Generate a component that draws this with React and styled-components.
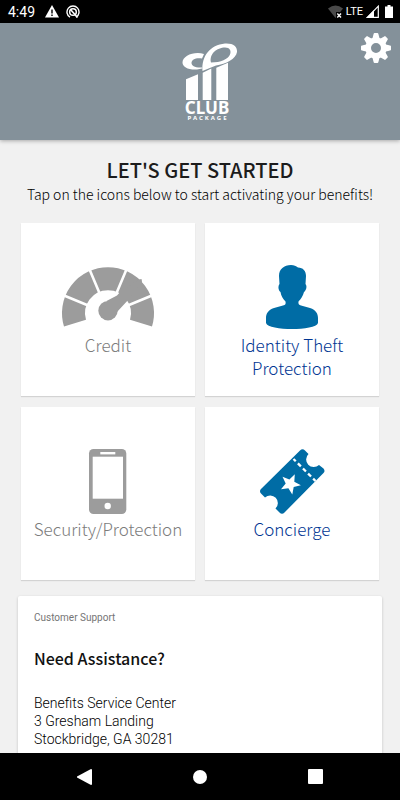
import styled, { createGlobalStyle } from 'styled-components';

const GlobalStyle = createGlobalStyle`
  * {
    box-sizing: border-box;
  }

  body {
    margin: 0;
    background-color: #f1f1f1;
    font-family: "Noto Sans CJK SC", "Noto Sans", sans-serif;
  }
`;

const Screen = styled.div`
  display: flex;
  flex-direction: column;
  height: 100vh;
`;

//Android status bar
const StatusBar = styled.div`
  display: flex;
  align-items: center;
  flex-shrink: 0;
  height: 23px;
  padding: 0 7px 0 8px;
  background-color: #000;
  color: #fff;
  font-family: Roboto, sans-serif;
  font-size: 14px;
`;

const StatusGroup = styled.div`
  display: flex;
  align-items: center;
  gap: ${(props) => props.$gap};
  margin-left: ${(props) => props.$left};
`;

const Network = styled.span`
  font-size: 11px;
`;

//App header
const Header = styled.header`
  display: grid;
  grid-template-columns: 1fr auto 1fr;
  flex-shrink: 0;
  height: 117px;
  padding: 19px 9px 0;
  background-color: #84919a;
  box-shadow: 0 1px 4px rgba(0, 0, 0, 0.3);
  z-index: 1;
`;

const Brand = styled.div`
  grid-column: 2;
  display: flex;
  flex-direction: column;
  align-items: center;
  width: 60px;
  margin-left: 20px;
  color: #fff;
  font-family: "Noto Sans", sans-serif;
  font-weight: 700;
`;

const BrandName = styled.span`
  margin-right: 6px;
  font-size: 17px;
  line-height: 13px;
`;

const BrandSub = styled.span`
  margin-right: 4px;
  font-size: 6px;
  line-height: 8px;
  letter-spacing: 2px;
`;

const SettingsButton = styled.button`
  justify-self: end;
  align-self: start;
  display: flex;
  margin-top: -9px;
  padding: 0;
  border: none;
  background: none;
  color: #fff;
  cursor: pointer;
`;

const Content = styled.main`
  flex: 1;
  min-height: 0;
  overflow: hidden;
  padding: 18px 18px 0;
`;

const Title = styled.h1`
  margin: 0;
  color: #1c1c1c;
  font-size: 20px;
  font-weight: 500;
  line-height: 24px;
  text-align: center;
`;

const Intro = styled.p`
  margin: 0;
  color: #000;
  font-size: 14px;
  font-weight: 300;
  line-height: 24px;
  text-align: center;
  white-space: nowrap;
`;

const Grid = styled.div`
  display: grid;
  grid-template-columns: 1fr 1fr;
  gap: 11px 10px;
  margin: 17px 3px 16px;
`;

const Tile = styled.button`
  display: flex;
  flex-direction: column;
  align-items: center;
  height: 173px;
  padding: 39px 8px 0;
  border: none;
  background-color: #fff;
  box-shadow: 0 1px 1px rgba(0, 0, 0, 0.12);
  color: ${(props) => (props.$active ? '#003592' : '#7c7c7c')};
  font-family: inherit;
  font-size: 17px;
  font-weight: 300;
  line-height: 23px;
  cursor: pointer;
`;

const TileIcon = styled.svg`
  flex-shrink: 0;
  width: 104px;
  height: 72px;
  margin-bottom: -1px;
`;

const SupportCard = styled.section`
  padding: 14px 16px;
  border-radius: 2px;
  background-color: #fff;
  box-shadow: 0 1px 3px rgba(0, 0, 0, 0.2);
  font-family: Roboto, sans-serif;
`;

const SupportLabel = styled.p`
  margin: 0;
  color: #757575;
  font-size: 10px;
  line-height: 16px;
`;

const SupportTitle = styled.h2`
  margin: 20px 0 24px;
  color: #111;
  font-family: "Noto Sans CJK SC", "Noto Sans", sans-serif;
  font-size: 16px;
  font-weight: 500;
  line-height: 24px;
`;

const Address = styled.address`
  color: #000;
  font-size: 14px;
  font-style: normal;
  font-weight: 300;
  line-height: 18px;
`;

const NavBar = styled.nav`
  display: flex;
  align-items: center;
  justify-content: space-around;
  flex-shrink: 0;
  height: 47px;
  padding: 0 26px;
  background-color: #000;
`;

const NavButton = styled.button`
  display: flex;
  padding: 0;
  border: none;
  background: none;
  cursor: pointer;
`;

const Logo = () => (
  <svg width="60" height="59" viewBox="0 0 60 59" fill="#fff" aria-hidden="true">
    <path d="M6 37.3 18 32.3V58H6zM22.7 30.7 31.3 26.5V58H22.7zM36.3 25.7 48 20.7V58H36.3z" />
    <path
      fillRule="evenodd"
      d="M22.500 29C21.500 14 30 3 45 1.500C53 1 57.500 4.500 57 10C56 17 46 22 36 23.500L31 25.500zM31 20.500C41 20.500 48 17 50 12.500C51.500 9 50 5.500 45 5.500C37 5.500 29 12 31 20.500z"
    />
    <path d="M24 12C14 9 2.500 14 2.500 20.500C2.500 25 8 28 17 27.500L22 26.500V25.500C15 26 11.500 23.500 11.500 21C11.500 17.500 16 15.500 22 16.500z" />
  </svg>
);

const Gauge = () => (
  <TileIcon viewBox="0 0 104 72" aria-hidden="true">
    <path d="M19 61.200A34.500 34.500 0 1 1 85 61.200" fill="none" stroke="#9c9c9c" strokeWidth="23" />
    <path
      d="M34 44.200 5 32.200M44.500 33.500 32.500 5M59.500 33.500 71.500 5M70 44.200 99 32.200"
      fill="none"
      stroke="#fff"
      strokeWidth="2.600"
    />
    <circle cx="52" cy="48.700" r="9.700" fill="#9c9c9c" />
    <path d="M50.500 39 61 33.500 65 29 83 17.500 85.500 17 86 19.500 73 37 61 50z" fill="#9c9c9c" />
  </TileIcon>
);

const Person = () => (
  <TileIcon viewBox="0 0 104 72" fill="#006ca5" aria-hidden="true">
    <path d="M39 14C39 7 44 3 51 3C54 3 56 4 58 5.500C63 5.500 66 9 66 14L65.500 22C67.500 24 66 29 64 30C63 34 61 37 58.500 39.500C58 42 59 43 61 43.500L70 46C76 48 78 52 78 56V61C77 65 64 67 52 67S27 65 26 61V56C26 52 28 48 34 46L43 43.500C45.500 43 46 42 45.500 39.500C43 37 41 34 40.500 30C38 28 38 24 39.500 22z" />
  </TileIcon>
);

const Phone = () => (
  <TileIcon viewBox="0 0 104 72" aria-hidden="true">
    <rect x="33" y="3" width="37.300" height="65" rx="4.500" fill="#9c9c9c" />
    <rect x="36.700" y="10.700" width="30.300" height="42" fill="#fff" />
    <rect x="44.300" y="6" width="15" height="2.400" fill="#fff" />
    <circle cx="51.700" cy="60" r="3.200" fill="#fff" />
  </TileIcon>
);

const Ticket = () => (
  <TileIcon viewBox="0 0 104 72" aria-hidden="true">
    <path
      d="M60 4.500Q62.500 2 65 4.500L68.500 8A6.500 6.500 0 0 0 79 19L83.500 22.500Q85.500 25 83.500 27L44.500 66.500Q42 69 39.500 66.500L35.500 62.500A6.500 6.500 0 0 0 25 51.500L21 47.500Q19 45 21 43z"
      fill="#006ca5"
    />
    <path d="M53.500 13 75.500 35" stroke="#fff" strokeWidth="2.300" strokeDasharray="4.200 3" strokeDashoffset="1" />
    <path
      d="M54.800 28.300 54.300 35.800 60.900 39.300 53.700 41.100 52.300 48.500 48.400 42.200 41 43.200 45.700 37.400 42.500 30.700 49.400 33.500z"
      fill="#fff"
    />
  </TileIcon>
);

const Gear = () => (
  <svg width="30" height="30" viewBox="0 0 30 30" aria-hidden="true">
    <g fill="currentColor">
      {[0, 45, 90, 135, 180, 225, 270, 315].map((angle) => (
        <path key={angle} d="M11 7 12.600 1Q12.800 0 13.600 0H16.400Q17.200 0 17.400 1L19 7z" transform={`rotate(${angle} 15 15)`} />
      ))}
    </g>
    <circle cx="15" cy="15" r="7.800" fill="none" stroke="currentColor" strokeWidth="5.600" />
  </svg>
);

const Warning = () => (
  <svg width="14" height="13" viewBox="0 0 14 13" aria-hidden="true">
    <path d="M7 0 14 12.500H0z" fill="#fff" />
    <path d="M7 4.500V8.500M7 9.500V11" stroke="#000" strokeWidth="1.400" />
  </svg>
);

const Sync = () => (
  <svg width="14" height="14" viewBox="0 0 14 14" fill="none" stroke="#fff" aria-hidden="true">
    <path d="M4 12.200A6 6 0 1 1 10 12.200" strokeWidth="1.400" />
    <circle cx="7" cy="7" r="3.300" strokeWidth="1.500" />
    <path d="M4.500 4.500 11.500 12.500" strokeWidth="1.700" />
  </svg>
);

const Wifi = () => (
  <svg width="15" height="14" viewBox="0 0 15 14" aria-hidden="true">
    <path d="M0 3.500Q7.500-2.500 15 3.500L7.500 13z" fill="#4a4a4a" />
    <path d="M8 7H15V14H8z" fill="#000" />
    <path d="M9.300 8.500 13 12.500M13 8.500 9.300 12.500" stroke="#fff" strokeWidth="1.400" />
  </svg>
);

const Signal = () => (
  <svg width="13" height="13" viewBox="0 0 13 13" aria-hidden="true">
    <path d="M12.300 1.200V12.300H1.500z" fill="none" stroke="#fff" strokeWidth="1.200" />
    <path d="M0 13 8 5V13z" fill="#fff" />
  </svg>
);

const Battery = () => (
  <svg width="8" height="13" viewBox="0 0 8 13" fill="#fff" aria-hidden="true">
    <path d="M2.500 0H5.500V1.500H8V13H0V1.500H2.500z" />
  </svg>
);

const tiles = [
  { label: 'Credit', Icon: Gauge },
  { label: 'Identity Theft Protection', Icon: Person, active: true },
  { label: 'Security/Protection', Icon: Phone },
  { label: 'Concierge', Icon: Ticket, active: true },
];

const App = () => {
  return (
    <Screen>
      <GlobalStyle />
      <StatusBar>
        <span>4:49</span>
        <StatusGroup $gap="7px" $left="10px">
          <Warning />
          <Sync />
        </StatusGroup>
        <StatusGroup $gap="3px" $left="auto">
          <Wifi />
          <Network>LTE</Network>
          <Signal />
        </StatusGroup>
        <StatusGroup $gap="0" $left="6px">
          <Battery />
        </StatusGroup>
      </StatusBar>

      <Header>
        <Brand>
          <Logo />
          <BrandName>CLUB</BrandName>
          <BrandSub>PACKAGE</BrandSub>
        </Brand>
        <SettingsButton aria-label="Settings">
          <Gear />
        </SettingsButton>
      </Header>

      <Content>
        <Title>LET'S GET STARTED</Title>
        <Intro>Tap on the icons below to start activating your benefits!</Intro>

        <Grid>
          {tiles.map(({ label, Icon, active }) => (
            <Tile key={label} $active={active}>
              <Icon />
              {label}
            </Tile>
          ))}
        </Grid>

        <SupportCard>
          <SupportLabel>Customer Support</SupportLabel>
          <SupportTitle>Need Assistance?</SupportTitle>
          <Address>
            Benefits Service Center
            <br />
            3 Gresham Landing
            <br />
            Stockbridge, GA 30281
          </Address>
        </SupportCard>
      </Content>

      <NavBar>
        <NavButton aria-label="Back">
          <svg width="15" height="16" viewBox="0 0 15 16" fill="#fff">
            <path d="M14 0Q15 0 15 1V15Q15 16 14 16L0 8.500V7.500z" />
          </svg>
        </NavButton>
        <NavButton aria-label="Home">
          <svg width="14" height="14" viewBox="0 0 14 14" fill="#fff">
            <circle cx="7" cy="7" r="7" />
          </svg>
        </NavButton>
        <NavButton aria-label="Recent apps">
          <svg width="15" height="15" viewBox="0 0 15 15" fill="#fff">
            <rect width="15" height="15" rx="1" />
          </svg>
        </NavButton>
      </NavBar>
    </Screen>
  );
};

export default App;
